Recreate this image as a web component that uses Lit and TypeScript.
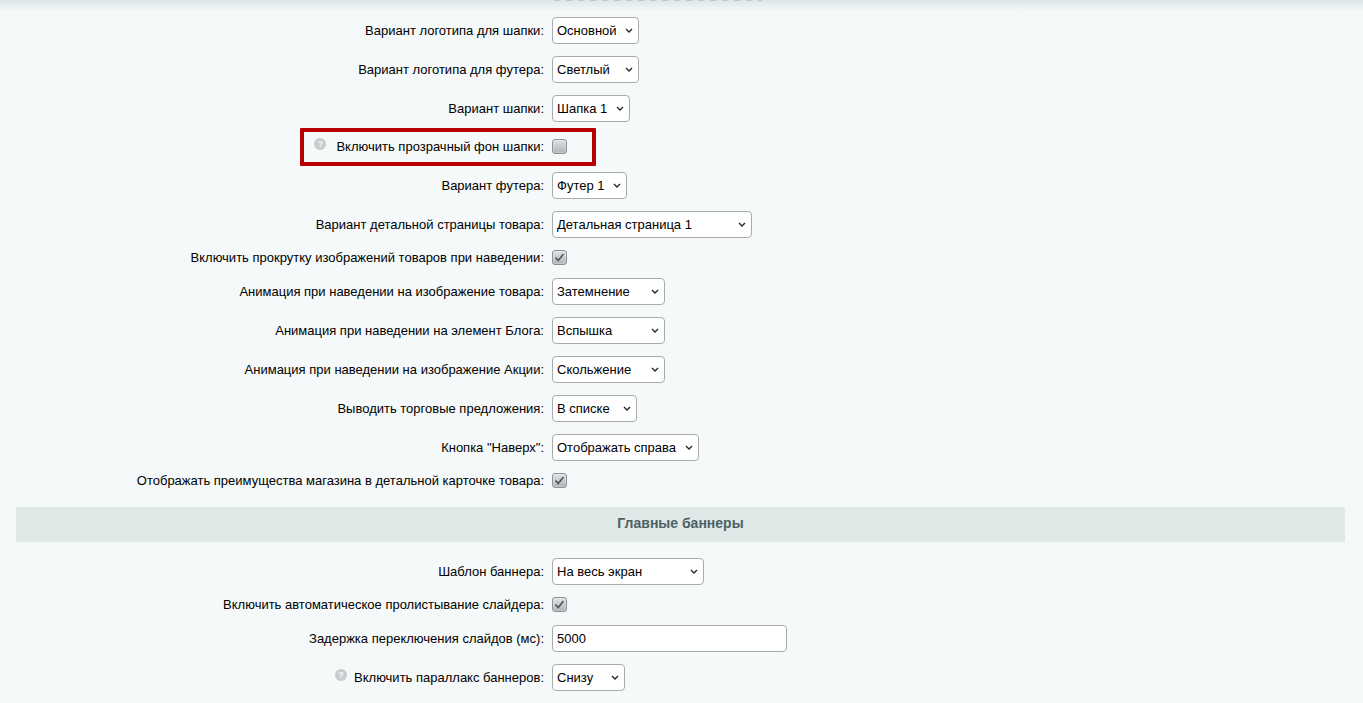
import { LitElement, html, css, nothing } from "lit";
import { customElement } from "lit/decorators.js";

type Row = { label: string; kind: "select" | "check" | "input"; value?: string; width?: number; checked?: boolean; help?: number; height?: number; after?: number; boxed?: boolean; };

const top: Row[] = [
  { label: "Вариант логотипа для шапки:", kind: "select", value: "Основной", width: 87 },
  { label: "Вариант логотипа для футера:", kind: "select", value: "Светлый", width: 87 },
  { label: "Вариант шапки:", kind: "select", value: "Шапка 1", width: 78 },
  { label: "Включить прозрачный фон шапки:", kind: "check", help: 10, height: 37, after: 1, boxed: true },
  { label: "Вариант футера:", kind: "select", value: "Футер 1", width: 75 },
  { label: "Вариант детальной страницы товара:", kind: "select", value: "Детальная страница 1", width: 200 },
  { label: "Включить прокрутку изображений товаров при наведении:", kind: "check", checked: true, height: 27, after: 1 },
  { label: "Анимация при наведении на изображение товара:", kind: "select", value: "Затемнение", width: 113 },
  { label: "Анимация при наведении на элемент Блога:", kind: "select", value: "Вспышка", width: 113 },
  { label: "Анимация при наведении на изображение Акции:", kind: "select", value: "Скольжение", width: 113 },
  { label: "Выводить торговые предложения:", kind: "select", value: "В списке", width: 85 },
  { label: "Кнопка \"Наверх\":", kind: "select", value: "Отображать справа", width: 147 },
  { label: "Отображать преимущества магазина в детальной карточке товара:", kind: "check", checked: true, height: 27 },
];
const bottom: Row[] = [
  { label: "Шаблон баннера:", kind: "select", value: "На весь экран", width: 152 },
  { label: "Включить автоматическое пролистывание слайдера:", kind: "check", checked: true, height: 27, after: 1 },
  { label: "Задержка переключения слайдов (мс):", kind: "input", value: "5000", width: 235 },
  { label: "Включить параллакс баннеров:", kind: "select", value: "Снизу", width: 73, help: 7 },
];

@customElement("app-root")
export class AppRoot extends LitElement {
  static styles = css`
    :host { display: block; height: 703px; overflow: hidden; background: #f5f9f9; font-family: "Liberation Sans", Arial, sans-serif; font-size: 13px; color: #000; }
    .topbar { height: 11px; background: linear-gradient(#dde5e8, #f5f9f9); padding-left: 554px; }
    .dash { width: 208px; height: 1px; background: repeating-linear-gradient(90deg, #c3c9c9 0 6px, transparent 6px 12px); }
    .rows { display: flex; flex-direction: column; }
    .row { display: grid; grid-template-columns: 544px 1fr; column-gap: 8px; align-items: center; height: 39px; position: relative; }
    .label { display: flex; justify-content: flex-end; align-items: center; }
    .help { width: 12px; height: 12px; border-radius: 50%; background: #c9cccc; color: #f5f9f9; font-size: 9px; font-weight: bold; line-height: 12px; text-align: center; position: relative; top: -3px; }
    .sel { display: inline-block; position: relative; vertical-align: top; }
    .sel svg { position: absolute; right: 6px; top: 11px; pointer-events: none; }
    select, input.text { display: block; box-sizing: border-box; height: 27px; border: 1px solid #a7adad; border-radius: 4px; background: #fff; font: 13px "Liberation Sans", Arial, sans-serif; color: #000; padding: 0 0 0 4px; margin: 0; }
    select { appearance: none; -webkit-appearance: none; }
    input.text { padding: 0 4px; outline: none; }
    .ctl { display: flex; align-items: center; }
    .cb { box-sizing: border-box; width: 15px; height: 15px; border: 1px solid #8b9191; border-radius: 3px; background: linear-gradient(#dfe2e4, #aeb4b8); display: flex; align-items: center; justify-content: center; box-shadow: inset 0 0 0 1px rgba(255,255,255,.25); }
    .cb svg { display: block; }
    .box { position: absolute; left: 300px; width: 296px; top: 0; height: 38px; box-sizing: border-box; border: 4px solid #b90000; border-radius: 1px; pointer-events: none; }
    .section { margin: 13px 18px 10px 16px; height: 35px; background: #e0e8e8; display: flex; align-items: center; justify-content: center; font-size: 14px; font-weight: bold; color: #4b6264; padding-bottom: 4px; box-sizing: border-box; }
  `;

  private renderControl(r: Row) {
    if (r.kind === "select") {
      return html`<div class="sel"><select style="width:${r.width}px"><option>${r.value}</option></select><svg width="8" height="6" viewBox="0 0 8 6"><path d="M1 1 L4 4 L7 1" fill="none" stroke="#222" stroke-width="1.3"/></svg></div>`;
    }
    if (r.kind === "input") {
      return html`<input class="text" style="width:${r.width}px" .value=${r.value ?? ""} />`;
    }
    return html`<div class="cb">${r.checked
      ? html`<svg width="11" height="11" viewBox="0 0 11 11"><path d="M1.5 5.5 L4.2 8.5 L9.5 2" fill="none" stroke="#4c5254" stroke-width="1.5"/></svg>`
      : nothing}</div>`;
  }

  private renderRow(r: Row) {
    const s = `${r.height ? `height:${r.height}px;` : ""}${r.after ? `margin-bottom:${r.after}px;` : ""}`;
    return html`<div class="row" style=${s}>
      <div class="label">${r.help ? html`<span class="help" style="margin-right:${r.help}px">?</span>` : nothing}<span>${r.label}</span></div>
      <div class="ctl">${this.renderControl(r)}</div>
      ${r.boxed ? html`<div class="box"></div>` : nothing}
    </div>`;
  }

  render() {
    return html`
      <div class="topbar"><div class="dash"></div></div>
      <div class="rows">${top.map((r) => this.renderRow(r))}</div>
      <div class="section">Главные баннеры</div>
      <div class="rows">${bottom.map((r) => this.renderRow(r))}</div>
    `;
  }
}
